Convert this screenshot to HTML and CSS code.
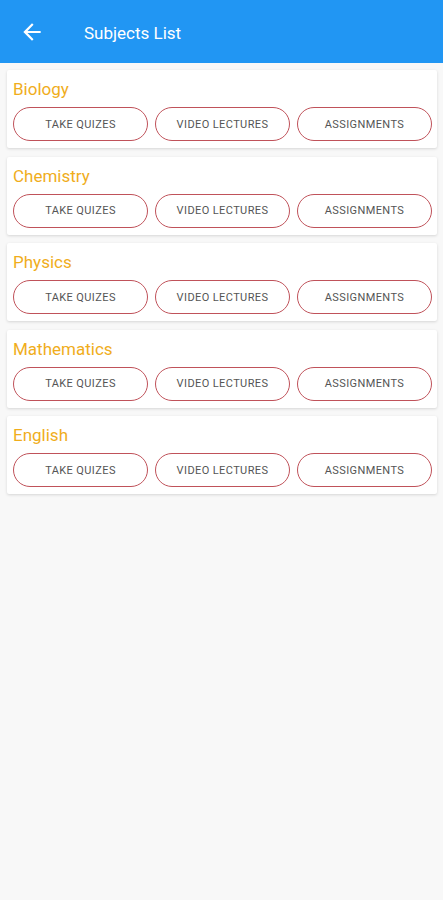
FILE: index.html
```html
<!DOCTYPE html>
<html>
  <head>
    <title>Subjects List</title>
    <link rel="stylesheet" href="styles.css">
  </head>
  <body>
    <div class="appbar">
      <svg class="back-icon" viewBox="0 0 24 24" width="26" height="26">
        <path d="M20 11H7.83l5.59-5.59L12 4l-8 8 8 8 1.41-1.41L7.83 13H20v-2z" fill="#fff" />
      </svg>
      <span class="appbar-title">Subjects List</span>
    </div>

    <div class="subject-list">
      <div class="subject-card">
        <div class="subject-name">Biology</div>
        <div class="actions">
          <button class="pill">Take Quizes</button>
          <button class="pill">Video Lectures</button>
          <button class="pill">Assignments</button>
        </div>
      </div>

      <div class="subject-card">
        <div class="subject-name">Chemistry</div>
        <div class="actions">
          <button class="pill">Take Quizes</button>
          <button class="pill">Video Lectures</button>
          <button class="pill">Assignments</button>
        </div>
      </div>

      <div class="subject-card">
        <div class="subject-name">Physics</div>
        <div class="actions">
          <button class="pill">Take Quizes</button>
          <button class="pill">Video Lectures</button>
          <button class="pill">Assignments</button>
        </div>
      </div>

      <div class="subject-card">
        <div class="subject-name">Mathematics</div>
        <div class="actions">
          <button class="pill">Take Quizes</button>
          <button class="pill">Video Lectures</button>
          <button class="pill">Assignments</button>
        </div>
      </div>

      <div class="subject-card">
        <div class="subject-name">English</div>
        <div class="actions">
          <button class="pill">Take Quizes</button>
          <button class="pill">Video Lectures</button>
          <button class="pill">Assignments</button>
        </div>
      </div>
    </div>
  </body>
</html>
```

FILE: styles.css
```css
/* Subjects list screen */
body {
  font-family: Roboto, "Liberation Sans", sans-serif;
  background-color: #f8f8f8;
  margin: 0;
  padding: 0;
}

.appbar {
  height: 63px;
  display: flex;
  align-items: center;
  padding-left: 19px;
  background-color: #2196f3;
  box-sizing: border-box;
}

.back-icon {
  display: block;
  margin-top: 1px;
}

.appbar-title {
  margin-left: 39px;
  color: #fff;
  font-size: 17px;
  margin-top: 2px;
}

.subject-list {
  padding: 7px 6px 0 7px;
}

.subject-card {
  background-color: #fff;
  border-radius: 2px;
  box-shadow: 0 1px 3px rgba(0, 0, 0, 0.14);
  padding: 8px 5px 7px 6px;
  margin-bottom: 8.5px;
}

.subject-name {
  color: #f0ad1c;
  font-size: 17px;
  line-height: 22px;
  margin-bottom: 7px;
}

.actions {
  display: grid;
  grid-template-columns: repeat(3, 1fr);
  gap: 7px;
}

.pill {
  height: 34px;
  padding: 0;
  background-color: #fff;
  border: 1.5px solid #c0525a;
  border-radius: 17px;
  color: #555;
  font-family: Roboto, "Liberation Sans", sans-serif;
  font-size: 11px;
  letter-spacing: 0.4px;
  text-transform: uppercase;
  cursor: pointer;
}
```
